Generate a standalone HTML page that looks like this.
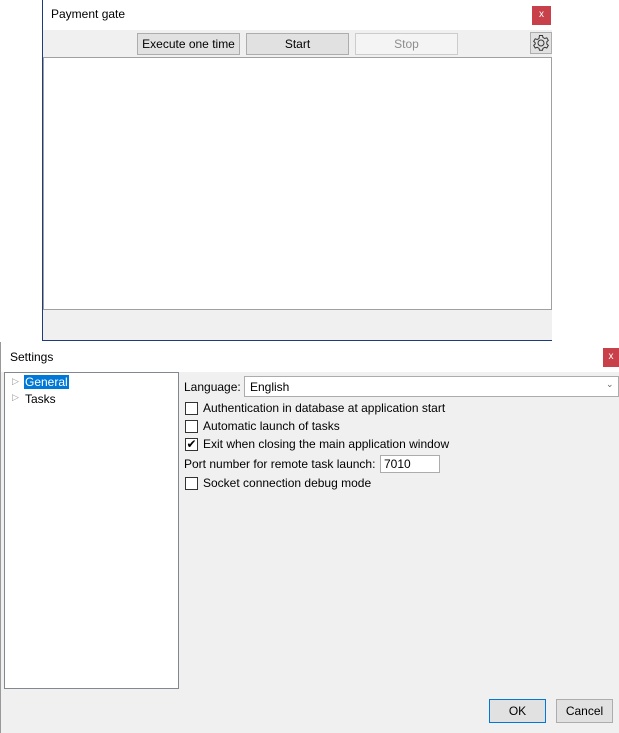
<!DOCTYPE html><html><head><style>
body{margin:0;width:619px;height:733px;background:#fff;font-family:"Liberation Sans",sans-serif;font-size:12px;color:#000;position:relative;overflow:hidden}
.a{position:absolute;box-sizing:border-box}
.btn{position:absolute;box-sizing:border-box;border:1px solid #adadad;background:#e1e1e1;text-align:center;line-height:20px;font-size:12px}
.cb{position:absolute;width:13px;height:13px;border:1px solid #333;background:#fff;box-sizing:border-box}
.t{position:absolute;white-space:nowrap}
</style></head><body>
<div class="a" style="left:42px;top:0;width:510px;height:341px;border-left:1px solid #1c3d7a;border-bottom:1px solid #1c3d7a;background:#fff"></div>
<div class="t" style="left:51px;top:7px">Payment gate</div>
<div class="a" style="left:532px;top:6px;width:19px;height:19px;background:#c8414a;color:#fff;font-size:10px;text-align:center;line-height:18px">x</div>
<div class="a" style="left:43px;top:30px;width:509px;height:27px;background:#f0f0f0"></div>
<div class="btn" style="left:137px;top:33px;width:103px;height:22px">Execute one time</div>
<div class="btn" style="left:246px;top:33px;width:103px;height:22px">Start</div>
<div class="btn" style="left:355px;top:33px;width:103px;height:22px;background:#f4f4f4;border-color:#ccc;color:#8d8d8d">Stop</div>
<div class="btn" style="left:530px;top:32px;width:22px;height:22px;background:#e1e1e1"><svg width="20" height="20" viewBox="0 0 20 20"><circle cx="10" cy="10" r="3" fill="none" stroke="#333"/><path d="M8.5 2.5h3l.5 2 1.8 1 2-.7 1.5 2.6-1.5 1.4v2.2l1.5 1.4-1.5 2.6-2-.7-1.8 1-.5 2h-3l-.5-2-1.8-1-2 .7-1.5-2.6 1.5-1.4V9.8L2.7 8.4l1.5-2.6 2 .7 1.8-1z" fill="none" stroke="#333"/></svg></div>
<div class="a" style="left:43px;top:57px;width:509px;height:253px;border:1px solid #a0a0a0;background:#fff"></div>
<div class="a" style="left:43px;top:310px;width:509px;height:30px;background:#f0f0f0"></div>
<div class="a" style="left:0;top:342px;width:619px;height:391px;background:#f0f0f0;border-left:1px solid #999"></div>
<div class="a" style="left:1px;top:342px;width:618px;height:30px;background:#fff"></div>
<div class="t" style="left:10px;top:350px">Settings</div>
<div class="a" style="left:603px;top:348px;width:16px;height:19px;background:#c8414a;color:#fff;font-size:10px;text-align:center;line-height:18px">x</div>
<div class="a" style="left:4px;top:372px;width:175px;height:317px;border:1px solid #828790;background:#fff"></div>
<div class="t" style="left:12px;top:376px;color:#999;font-size:9px">▷</div>
<div class="t" style="left:24px;top:375px;background:#0078d7;color:#fff;padding:0 1px">General</div>
<div class="t" style="left:12px;top:392px;color:#999;font-size:9px">▷</div>
<div class="t" style="left:25px;top:392px">Tasks</div>
<div class="t" style="left:184px;top:380px">Language:</div>
<div class="a" style="left:244px;top:376px;width:375px;height:21px;border:1px solid #acacac;background:#fff"></div>
<div class="t" style="left:250px;top:380px">English</div>
<div class="t" style="left:606px;top:379px;font-size:9px;color:#666">⌄</div>
<div class="cb" style="left:185px;top:402px"></div><div class="t" style="left:203px;top:401px">Authentication in database at application start</div>
<div class="cb" style="left:185px;top:420px"></div><div class="t" style="left:203px;top:419px">Automatic launch of tasks</div>
<div class="cb" style="left:185px;top:438px;font-size:12px;line-height:11px;text-align:center">✔</div><div class="t" style="left:203px;top:437px">Exit when closing the main application window</div>
<div class="t" style="left:184px;top:457px">Port number for remote task launch:</div>
<div class="a" style="left:380px;top:455px;width:60px;height:18px;border:1px solid #acacac;background:#fff;padding-left:3px;line-height:16px">7010</div>
<div class="cb" style="left:185px;top:477px"></div><div class="t" style="left:203px;top:476px">Socket connection debug mode</div>
<div class="btn" style="left:489px;top:699px;width:57px;height:24px;line-height:22px;border:1px solid #0078d7">OK</div>
<div class="btn" style="left:556px;top:699px;width:57px;height:24px;line-height:22px">Cancel</div>
</body></html>
